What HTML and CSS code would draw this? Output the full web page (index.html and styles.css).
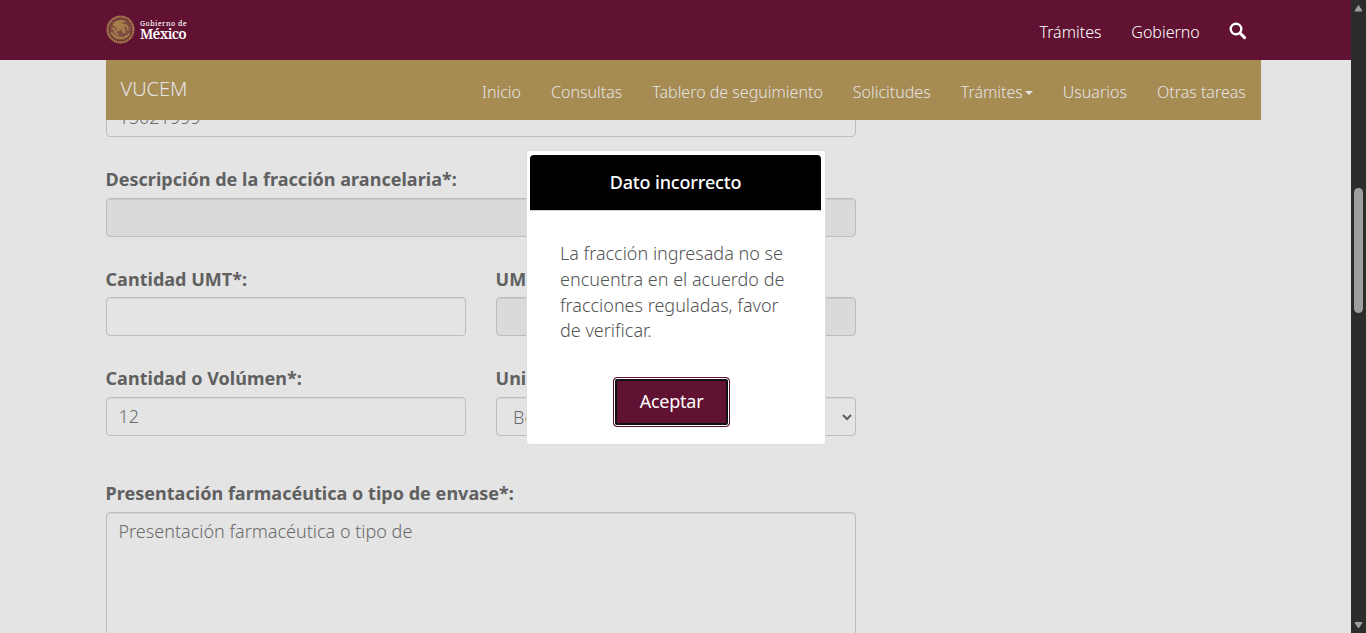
FILE: index.html
```html
<!DOCTYPE html>
<html lang="es">
<head>
<meta charset="utf-8">
<title>VUCEM</title>
<link rel="stylesheet" href="styles.css">
</head>
<body>
<div class="window">
  <div class="page">
    <header class="gov-bar">
      <a class="gov-logo">
        <svg class="seal" viewBox="0 0 30 30" width="29" height="29">
          <circle cx="15" cy="15" r="13.3" fill="none" stroke="#a57f4b" stroke-width="2.4" stroke-dasharray="2 .4"/>
          <circle cx="15" cy="15" r="11.2" fill="#7d4b3e" stroke="#8a5c42" stroke-width=".7"/>
          <path d="M7 10c2-4 9-6 14-3-3 0-5 1-6 2 4-1 8 1 9 6-2-2-4-3-6-3 2 2 3 4 2 8-1-3-2-5-4-6l-3 3-3-1 2-3-4 2 2-3-3-1z" fill="#a57f4b"/>
          <path d="M5.5 18c3 6 15 8 19 1M8 21c3 4 11 4 14 0M10 7l8 0M6 13l5 5M13 11l6 8M21 10l2 6M8 17l5 4" fill="none" stroke="#a57f4b" stroke-width="1.6"/>
        </svg>
        <span class="gov-name"><span class="gov-small">Gobierno de</span><span class="gov-big">México</span></span>
      </a>
      <nav class="gov-nav">
        <a>Trámites</a><a>Gobierno</a>
        <svg class="search" viewBox="0 0 18 18" width="18" height="18"><circle cx="7" cy="7" r="5.3" fill="none" stroke="#fff" stroke-width="2.4"/><path d="M11 11l4.6 4.6" stroke="#fff" stroke-width="3" stroke-linecap="round"/></svg>
      </nav>
    </header>
    <div class="site-bar">
      <a class="brand">VUCEM</a>
      <nav class="site-nav">
        <a>Inicio</a><a>Consultas</a><a>Tablero de seguimiento</a><a>Solicitudes</a><a>Trámites<i class="caret"></i></a><a>Usuarios</a><a>Otras tareas</a>
      </nav>
    </div>
    <main class="content">
      <form class="form">
        <div class="field"><div class="control">15021999</div></div>
        <div class="field"><label>Descripción de la fracción arancelaria*:</label><div class="control disabled"></div></div>
        <div class="row">
          <div class="field"><label>Cantidad UMT*:</label><div class="control"></div></div>
          <div class="field"><label>UMT*:</label><div class="control disabled"></div></div>
        </div>
        <div class="row">
          <div class="field"><label>Cantidad o Volúmen*:</label><div class="control">12</div></div>
          <div class="field"><label>Unidad*:</label><div class="control select"><span>Bolsa</span><svg viewBox="0 0 10 7" width="10" height="7"><path d="M1 1l4 4 4-4" fill="none" stroke="#5f5f5f" stroke-width="2"/></svg></div></div>
        </div>
        <div class="field last"><label>Presentación farmacéutica o tipo de envase*:</label><div class="control area">Presentación farmacéutica o tipo de</div></div>
      </form>
    </main>
  </div>
  <div class="scrollbar">
    <svg viewBox="0 0 9 8" width="9" height="8"><path d="M4.5 1.5L8 7H1z" fill="#9f9f9f" stroke="#9f9f9f" stroke-linejoin="round"/></svg>
    <div class="track"><div class="thumb"></div></div>
    <svg viewBox="0 0 9 8" width="9" height="8"><path d="M4.5 7L1 1.5h7z" fill="#9f9f9f" stroke="#9f9f9f" stroke-linejoin="round"/></svg>
  </div>
  <section class="dialog" role="dialog">
    <h2 class="dialog-title">Dato incorrecto</h2>
    <p class="dialog-text">La fracción ingresada no se encuentra en el acuerdo de fracciones reguladas, favor de verificar.</p>
    <button class="accept">Aceptar</button>
  </section>
</div>
</body>
</html>
```

FILE: styles.css
```css
* { box-sizing: border-box; }
body { margin: 0; font: 300 18px/25.72px "Noto Sans", sans-serif; color: #545454; }
.window { position: relative; display: flex; width: 1366px; height: 633px; overflow: hidden; background: #e4e4e4; }
.page { width: 1351px; display: flex; flex-direction: column; }
.gov-bar { height: 60px; flex: none; padding: 0 104px 0 106px; display: flex; justify-content: space-between; align-items: flex-start; background: #611232; color: #fff; }
.gov-logo { display: flex; align-items: center; gap: 5px; padding-top: 15px; }
.seal { display: block; }
.gov-name { display: flex; flex-direction: column; font-family: "Noto Serif", "Liberation Serif", serif; color: #fff; }
.gov-small { font-size: 7px; line-height: 8px; font-weight: 500; letter-spacing: .48px; }
.gov-big { font-size: 14px; line-height: 11px; font-weight: 600; letter-spacing: -.7px; }
.gov-nav { display: flex; gap: 30px; padding-top: 20px; font-size: 16px; }
.gov-nav .search { margin: 2px 1px 0 -1px; }
.gov-nav a { margin-right: -.2px; }
.gov-nav { margin-right: -.6px; }
.site-bar { width: 1155px; height: 60px; flex: none; margin-left: 106px; padding: 0 15.2px 0 14.5px; display: flex; justify-content: space-between; background: #a68b53; color: #e4e4e4; }
.brand { font-size: 20px; padding-top: 16px; }
.site-nav { display: flex; gap: 30px; padding-top: 20px; font-size: 16px; }
.caret { display: inline-block; margin-left: 2px; vertical-align: 3px; border: 4px solid transparent; border-top-color: #e4e4e4; border-bottom: 0; }
.content { flex: 1; min-height: 0; overflow: hidden; padding-left: 106px; }
.form { width: 750px; margin-top: -22px; display: flex; flex-direction: column; gap: 30px; }
.row { display: grid; grid-template-columns: 360px 360px; gap: 30px; }
label { display: block; font-weight: 700; margin: 0 0 5px -.5px; letter-spacing: .03px; white-space: nowrap; color: #606060; }
.control { height: 39px; padding: 6px 11.5px; border: 1px solid #bdbdbd; border-radius: 4px; box-shadow: inset 0 1px 1px rgba(0,0,0,.07); color: #6b6b6b; }
.disabled { background: #dadada; }
.select { display: flex; justify-content: space-between; align-items: center; padding: 2px 3px 0 16px; }
.area { height: 160px; }
.last { margin-top: 15px; }
.scrollbar { width: 15px; padding: 4px 0; display: flex; flex-direction: column; align-items: center; background: #2c2c2c; }
.track { flex: 1; padding-top: 176px; }
.thumb { width: 9px; height: 125px; border-radius: 5px; background: #9f9f9f; }
.dialog { position: absolute; left: 526px; top: 150px; width: 300px; height: 295px; padding: 4px 4px 0 3px; display: flex; flex-direction: column; background: #fff; border: 1px solid #ddd; border-radius: 4px; }
.dialog-title { height: 56px; margin: 0; text-align: center; background: #000; color: #fff; font-size: 18px; font-weight: 500; letter-spacing: -.15px; line-height: 54px; border-radius: 4px 4px 0 0; border-bottom: 1px solid #ccc; }
.dialog-text { margin: 30.3px 24px 32.8px 30px; color: #545454; }
.accept { width: 117px; height: 50px; flex: none; margin-left: 83px; padding: 0 0 1px; border: 1px solid #611232; border-radius: 4px; background: #611232; color: #fff; font: 400 18px/1 "Noto Sans", sans-serif; letter-spacing: -.25px; box-shadow: inset 0 0 0 1px #fff, inset 0 0 0 3px #101010; }
```
